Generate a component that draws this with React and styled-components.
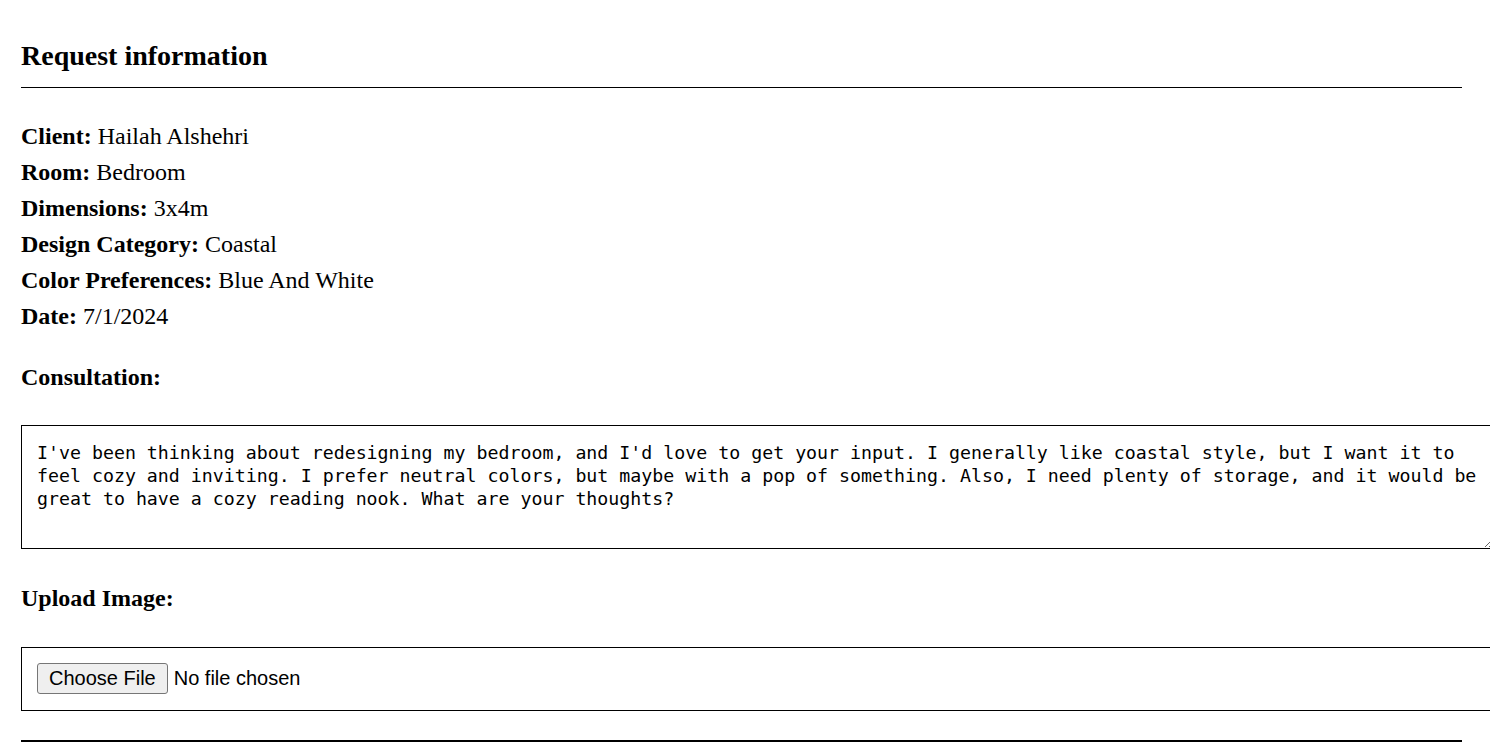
import React from 'react';
import styled, { createGlobalStyle } from 'styled-components';

const GlobalStyle = createGlobalStyle`
  html, body {
    margin: 0;
    padding: 0;
    background: #fff;
    overflow: hidden;
  }
  body {
    font-family: "Liberation Serif", "Times New Roman", serif;
    color: #000;
  }
`;

const Page = styled.div`
  padding: 40px 28px 0 21px;
`;

const Title = styled.h2`
  margin: 0;
  font-size: 28px;
  line-height: 32px;
  font-weight: 700;
  padding-bottom: 15px;
  border-bottom: 1px solid #000;
`;

const InfoList = styled.div`
  margin-top: 30px;
  display: flex;
  flex-direction: column;
`;

const InfoRow = styled.div`
  font-size: 24px;
  line-height: 36px;

  b {
    font-weight: 700;
  }
`;

const SectionLabel = styled.div`
  margin-top: ${(p) => p.$top}px;
  font-size: 24px;
  line-height: 36px;
  font-weight: 700;
`;

const Consultation = styled.textarea`
  display: block;
  box-sizing: content-box;
  width: 100%;
  height: 92px;
  margin: 30px 0 0;
  padding: 15px;
  border: 1px solid #000;
  border-radius: 0;
  font-family: "DejaVu Sans Mono", "Liberation Mono", monospace;
  font-size: 18.25px;
  line-height: 23px;
  color: #000;
  background: #fff;
  outline: none;
`;

const FileBox = styled.div`
  box-sizing: content-box;
  width: 100%;
  height: 32px;
  margin-top: 31px;
  padding: 15px;
  border: 1px solid #000;
  display: flex;
  align-items: flex-start;
`;

const FileInput = styled.input`
  font-family: "Liberation Sans", Arial, sans-serif;
  font-size: 20px;
  color: #000;
  line-height: 31px;

  &::file-selector-button {
    font-family: "Liberation Sans", Arial, sans-serif;
    font-size: 20px;
    line-height: 23px;
    height: 31px;
    padding: 3px 11px;
    margin: 0 6px 0 0;
    border: 1px solid #767676;
    border-radius: 3px;
    background: #efefef;
    color: #000;
  }
`;

const BottomRule = styled.div`
  margin-top: 29px;
  border-top: 2px solid #000;
`;

const info = [
  ['Client', 'Hailah Alshehri'],
  ['Room', 'Bedroom'],
  ['Dimensions', '3x4m'],
  ['Design Category', 'Coastal'],
  ['Color Preferences', 'Blue And White'],
  ['Date', '7/1/2024'],
];

const message =
  "I've been thinking about redesigning my bedroom, and I'd love to get your input. I generally like coastal style, but I want it to feel cozy and inviting. I prefer neutral colors, but maybe with a pop of something. Also, I need plenty of storage, and it would be great to have a cozy reading nook. What are your thoughts?";

const App = () => (
  <>
    <GlobalStyle />
    <Page>
      <Title>Request information</Title>
      <InfoList>
        {info.map(([label, value]) => (
          <InfoRow key={label}>
            <b>{label}:</b> {value}
          </InfoRow>
        ))}
      </InfoList>
      <SectionLabel $top={25}>Consultation:</SectionLabel>
      <Consultation defaultValue={message} spellCheck={false} />
      <SectionLabel $top={31}>Upload Image:</SectionLabel>
      <FileBox>
        <FileInput type="file" accept="image/*" />
      </FileBox>
      <BottomRule />
    </Page>
  </>
);

export default App;
